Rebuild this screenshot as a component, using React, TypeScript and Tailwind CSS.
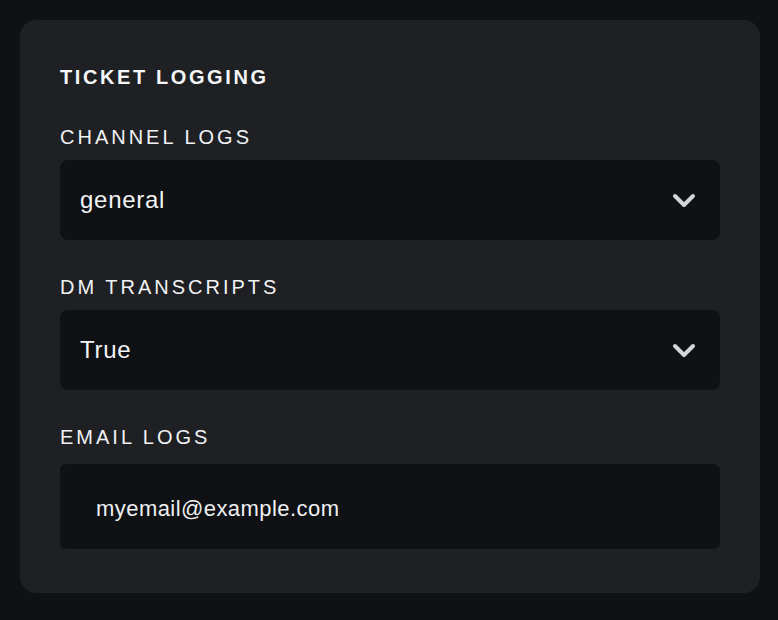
const Chevron = () => (
	<svg width="24" height="15" viewBox="0 0 24 15" fill="none" stroke="#d4d5d8" strokeWidth="4" strokeLinecap="round" strokeLinejoin="round">
		<polyline points="3,3 12,12 21,3" />
	</svg>
);

const SelectBox = ({ value }: { value: string }) => (
	<div className="flex h-20 items-center justify-between rounded-lg bg-[#0f1114] pl-5 pr-6">
		<span className="text-[24px] leading-none tracking-[0.03em] text-[#f3f4f5]">{value}</span>
		<Chevron />
	</div>
);

const Label = ({ text, className = '' }: { text: string; className?: string }) => (
	<div className={`text-[20px] leading-7 tracking-[0.15em] text-[#f1f2f3] ${className}`}>{text}</div>
);

export default function App() {
	return (
		<div className="min-h-screen bg-[#0f1114] pt-5 pl-5" style={{ fontFamily: '"Liberation Sans", Arial, sans-serif' }}>
			<div className="w-[740px] rounded-2xl bg-[#1e2024] px-10 pt-[43px] pb-[44px]">
				<h2 className="mb-8 text-[20px] font-bold leading-7 tracking-[0.13em] text-[#f5f6f7]">TICKET LOGGING</h2>

				<div>
					<Label text="CHANNEL LOGS" className="mb-[9px]" />
					<SelectBox value="general" />
				</div>

				<div className="mt-[33px]">
					<Label text="DM TRANSCRIPTS" className="mb-[9px]" />
					<SelectBox value="True" />
				</div>

				<div className="mt-[33px]">
					<Label text="EMAIL LOGS" className="mb-[13px]" />
					<div className="flex h-[85px] items-center rounded-md bg-[#0f1114] pl-9 pt-1">
						<span className="text-[22px] leading-none tracking-[0.02em] text-[#eef0f2]">myemail@example.com</span>
					</div>
				</div>
			</div>
		</div>
	);
}
